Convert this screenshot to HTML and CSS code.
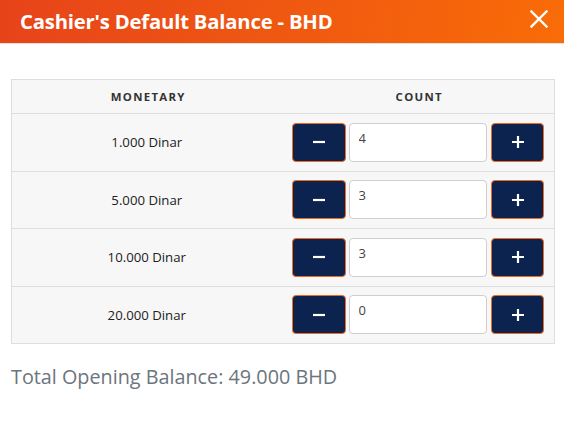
FILE: index.html
```html
<!DOCTYPE html>
<html>
<head>
<meta charset="utf-8">
<link rel="stylesheet" href="styles.css">
</head>
<body>
<div class="modal">
  <header class="modal-header">
    <h1 class="modal-title">Cashier's Default Balance - BHD</h1>
    <button class="close-btn" aria-label="Close">
      <svg width="18" height="18" viewBox="0 0 18 18"><path d="M1.5 1.5 L16.5 16.5 M16.5 1.5 L1.5 16.5" stroke="#fff" stroke-width="2.4" stroke-linecap="square"/></svg>
    </button>
  </header>
  <div class="modal-body">
    <table class="cash-table">
      <colgroup><col class="col-mon"><col class="col-count"></colgroup>
      <thead>
        <tr><th>MONETARY</th><th>COUNT</th></tr>
      </thead>
      <tbody>
        <tr>
          <td>1.000 Dinar</td>
          <td><div class="counter"><button class="step minus"><svg width="14" height="14" viewBox="0 0 14 14"><path d="M1 7 H13" stroke="#fff" stroke-width="2.2"/></svg></button><input class="count-input" value="4"><button class="step plus"><svg width="14" height="14" viewBox="0 0 14 14"><path d="M1 7 H13 M7 1 V13" stroke="#fff" stroke-width="2.2"/></svg></button></div></td>
        </tr>
        <tr>
          <td>5.000 Dinar</td>
          <td><div class="counter"><button class="step minus"><svg width="14" height="14" viewBox="0 0 14 14"><path d="M1 7 H13" stroke="#fff" stroke-width="2.2"/></svg></button><input class="count-input" value="3"><button class="step plus"><svg width="14" height="14" viewBox="0 0 14 14"><path d="M1 7 H13 M7 1 V13" stroke="#fff" stroke-width="2.2"/></svg></button></div></td>
        </tr>
        <tr>
          <td>10.000 Dinar</td>
          <td><div class="counter"><button class="step minus"><svg width="14" height="14" viewBox="0 0 14 14"><path d="M1 7 H13" stroke="#fff" stroke-width="2.2"/></svg></button><input class="count-input" value="3"><button class="step plus"><svg width="14" height="14" viewBox="0 0 14 14"><path d="M1 7 H13 M7 1 V13" stroke="#fff" stroke-width="2.2"/></svg></button></div></td>
        </tr>
        <tr>
          <td>20.000 Dinar</td>
          <td><div class="counter"><button class="step minus"><svg width="14" height="14" viewBox="0 0 14 14"><path d="M1 7 H13" stroke="#fff" stroke-width="2.2"/></svg></button><input class="count-input" value="0"><button class="step plus"><svg width="14" height="14" viewBox="0 0 14 14"><path d="M1 7 H13 M7 1 V13" stroke="#fff" stroke-width="2.2"/></svg></button></div></td>
        </tr>
      </tbody>
    </table>
    <p class="total">Total Opening Balance: 49.000 BHD</p>
  </div>
</div>
</body>
</html>
```

FILE: styles.css
```css
* { box-sizing: border-box; }
html, body { margin: 0; padding: 0; background: #fff; }
body { font-family: "Open Sans", "Noto Sans", sans-serif; color: #212529; }

.modal { width: 564px; }

.modal-header {
  height: 44px;
  background: linear-gradient(100deg, #e7431a 0%, #f05a10 55%, #f96c07 100%);
  border-bottom: 1px solid #e3e3e3;
  display: flex;
  align-items: center;
  justify-content: space-between;
  padding: 0 16px 2px 20px;
}
.modal-title {
  margin: 0;
  color: #fff;
  font-size: 20.3px;
  font-weight: 700;
  letter-spacing: -0.2px;
}
.close-btn {
  background: none;
  border: 0;
  padding: 0;
  width: 18px;
  height: 18px;
  display: flex;
  margin-top: -4px;
}

.modal-body { padding: 35px 10px 0 11px; }

.cash-table {
  width: 543px;
  table-layout: fixed;
  border-collapse: collapse;
  background: #f7f7f7;
  border: 1px solid #dedede;
  font-size: 13.2px;
}
.col-mon { width: 273px; }
.col-count { width: 270px; }
.cash-table th, .cash-table td {
  border-top: 1px solid #dedede;
  border-bottom: 1px solid #dedede;
  text-align: center;
}
.cash-table th {
  height: 34px;
  font-size: 11.4px;
  font-weight: 700;
  letter-spacing: 1.3px;
  color: #333;
  padding: 0;
}
.cash-table td {
  height: 57.5px;
  padding: 0 10px 0 7px;
  color: #222;
}

.counter {
  display: flex;
  height: 39px;
}
.step {
  flex: none;
  background: #0c2350;
  border: 1px solid #f26b1d;
  border-radius: 4px;
  display: flex;
  align-items: center;
  justify-content: center;
  padding: 0;
}
.minus { width: 54px; margin-right: 3px; }
.plus { width: 53px; margin-left: 4px; }
.count-input {
  flex: 1;
  min-width: 0;
  border: 1px solid #cfcfcf;
  border-radius: 4px;
  background: #fff;
  font-family: "Open Sans", "Noto Sans", sans-serif;
  font-size: 13px;
  color: #444;
  padding: 0 9px 9px;
}

.total {
  margin: 19px 0 0;
  font-size: 19.8px;
  color: #6c757d;
}
```
